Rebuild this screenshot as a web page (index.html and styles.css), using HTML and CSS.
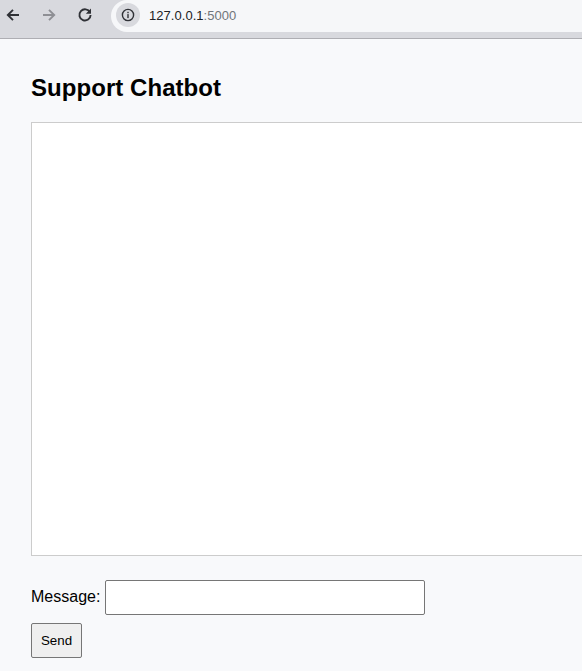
FILE: index.html
```html
<!DOCTYPE html>
<html lang="en">
<head>
<meta charset="utf-8">
<title>Support Chatbot</title>
<link rel="stylesheet" href="styles.css">
</head>
<body>
<header class="toolbar">
  <nav class="nav">
    <svg class="nav-icon" viewBox="0 0 16 16"><path d="M14 8H3M8 2.8 2.8 8 8 13.2" fill="none" stroke="#2f3136" stroke-width="1.9"/></svg>
    <svg class="nav-icon" viewBox="0 0 16 16"><path d="M2 8h11M8 2.8 13.2 8 8 13.2" fill="none" stroke="#8e8f94" stroke-width="1.9"/></svg>
    <svg class="nav-icon" viewBox="0 0 16 16"><path d="M13 5.4A5.6 5.6 0 1 0 13.6 8" fill="none" stroke="#2f3136" stroke-width="1.9"/><path d="M14 1.6v5.2H8.8z" fill="#2f3136"/></svg>
  </nav>
  <div class="address">
    <span class="site-info">
      <svg class="info-icon" viewBox="0 0 14 14"><circle cx="7" cy="7" r="5.6" fill="none" stroke="#2f3136" stroke-width="1.4"/><rect x="6.3" y="6.1" width="1.4" height="4" fill="#2f3136"/><rect x="6.3" y="3.8" width="1.4" height="1.4" fill="#2f3136"/></svg>
    </span>
    <span class="url">127.0.0.1<span class="port">:5000</span></span>
  </div>
</header>
<main class="page">
  <h1 class="title">Support Chatbot</h1>
  <div class="chat-box"></div>
  <form class="chat-form">
    <div class="message-row">
      <label class="message-label" for="message">Message:</label>
      <input class="message-input" id="message" type="text">
    </div>
    <button class="send-button" type="button">Send</button>
  </form>
</main>
</body>
</html>
```

FILE: styles.css
```css
html, body {
  margin: 0;
  height: 100%;
  overflow: hidden;
}
body {
  background: #f8f9fb;
  font-family: "Liberation Sans", Arial, sans-serif;
  color: #000;
}
.toolbar {
  box-sizing: border-box;
  height: 39px;
  display: flex;
  align-items: flex-start;
  background: #d8d9de;
  border-bottom: 1px solid #aeaeb3;
}
.nav {
  width: 111px;
  height: 30px;
  padding-left: 5px;
  box-sizing: border-box;
  display: flex;
  align-items: center;
  gap: 20px;
  flex: none;
}
.nav-icon {
  width: 16px;
  height: 16px;
  flex: none;
}
.address {
  flex: 1;
  box-sizing: border-box;
  height: 32px;
  display: flex;
  align-items: center;
  background: #f6f7f9;
  border-radius: 16px 0 0 16px;
  padding-left: 5px;
  padding-bottom: 2px;
}
.site-info {
  width: 24px;
  height: 24px;
  border-radius: 50%;
  background: #d8d9de;
  display: flex;
  align-items: center;
  justify-content: center;
  flex: none;
}
.info-icon {
  width: 14px;
  height: 14px;
}
.url {
  margin-left: 9px;
  font-family: "Liberation Sans", Arial, sans-serif;
  font-size: 13px;
  letter-spacing: 0.04px;
  color: #202124;
}
.port {
  color: #70757a;
}
.page {
  padding-left: 31px;
  overflow: hidden;
}
.title {
  margin: 0;
  padding-top: 35px;
  font-size: 24px;
  line-height: 28px;
  font-weight: 700;
  letter-spacing: 0.05px;
}
.chat-box {
  box-sizing: border-box;
  width: 700px;
  height: 434px;
  margin-top: 20px;
  background: #fff;
  border: 1px solid #ccc;
}
.chat-form {
  margin-top: 24px;
}
.message-row {
  display: flex;
  align-items: center;
  gap: 5px;
}
.message-label {
  font-size: 16px;
  padding-bottom: 2px;
}
.message-input {
  box-sizing: border-box;
  width: 320px;
  height: 35px;
  margin: 0;
  padding: 1px 2px;
  background: #fff;
  border: 1px solid #767676;
  border-radius: 2px;
}
.send-button {
  display: block;
  box-sizing: border-box;
  width: 51px;
  height: 35px;
  margin: 8px 0 0;
  padding: 0;
  background: #efefef;
  border: 1px solid #767676;
  border-radius: 2px;
  font-family: "Liberation Sans", Arial, sans-serif;
  font-size: 13.33px;
  color: #000;
}
```
